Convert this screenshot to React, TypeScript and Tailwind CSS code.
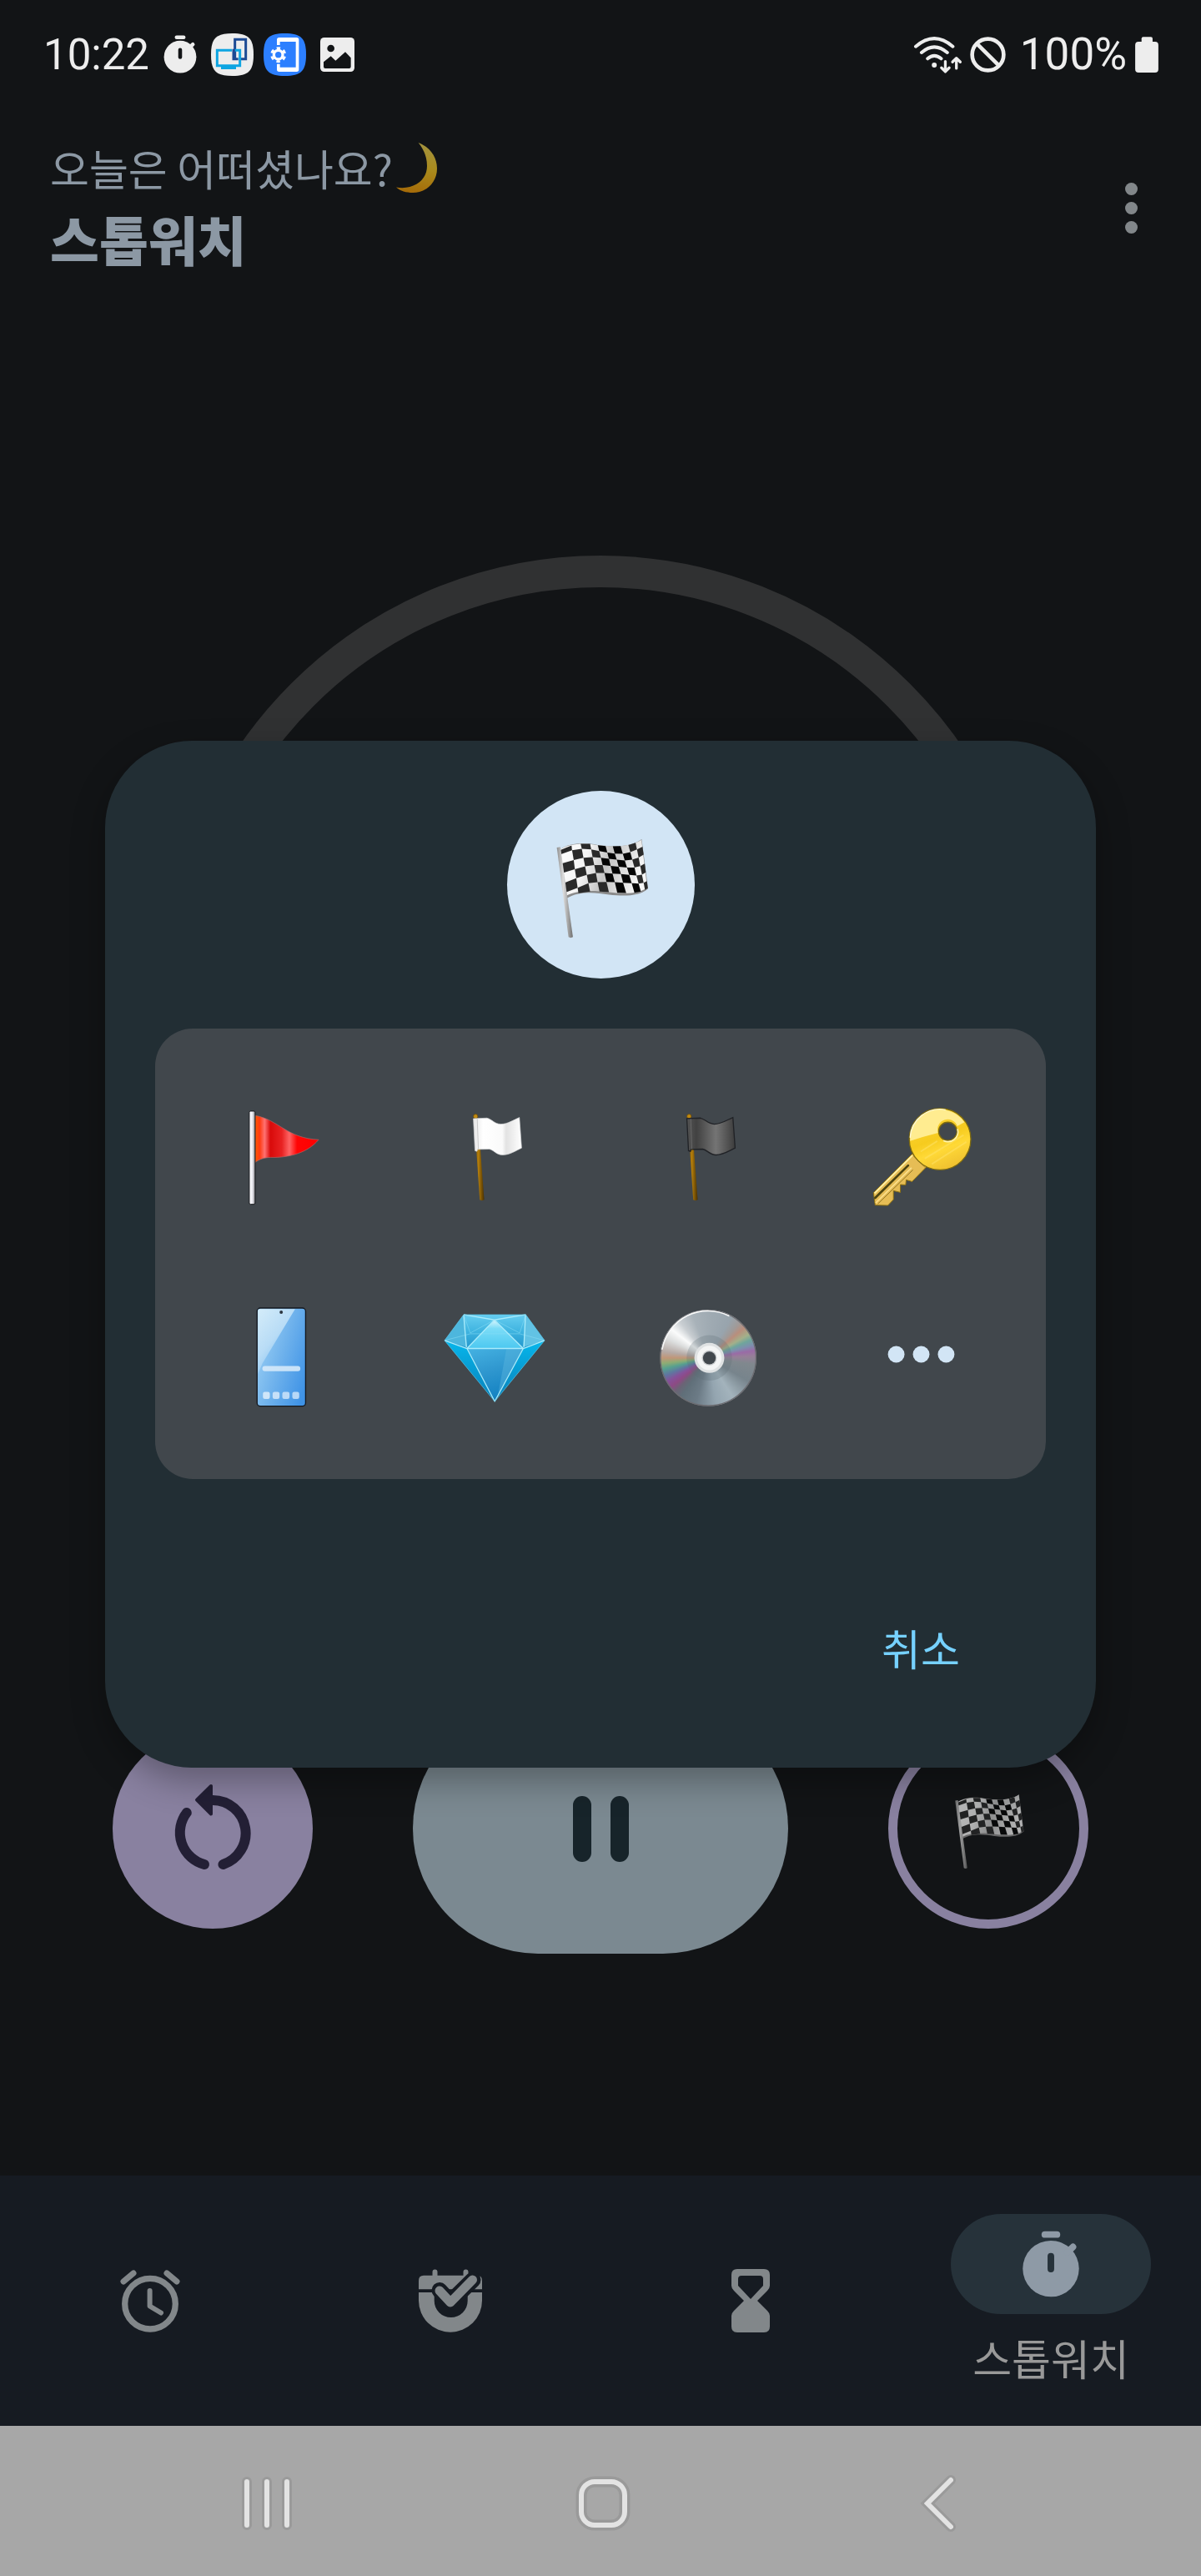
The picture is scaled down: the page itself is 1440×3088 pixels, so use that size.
import { useState } from 'react';

const sans = 'font-["Roboto","Noto_Sans_CJK_KR",sans-serif]';
const korean = 'font-["Noto_Sans_CJK_KR",sans-serif]';

// Column edges of the checkered cloth: x at the top, x at the bottom, then the y of every row line
const clothEdges = [
  { top: 245, bottom: 266, rows: [266, 281, 314, 348, 384, 419, 434] },
  { top: 285, bottom: 310, rows: [250, 267, 302, 335, 368, 402, 422] },
  { top: 318, bottom: 352, rows: [244, 262, 294, 325, 356, 386, 416] },
  { top: 352, bottom: 386, rows: [244, 264, 292, 320, 349, 382, 416] },
  { top: 380, bottom: 420, rows: [249, 270, 294, 320, 349, 381, 418] },
  { top: 408, bottom: 450, rows: [252, 275, 298, 323, 351, 382, 420] },
  { top: 434, bottom: 482, rows: [253, 279, 301, 326, 353, 384, 421] },
  { top: 462, bottom: 512, rows: [252, 280, 304, 329, 356, 386, 420] },
  { top: 490, bottom: 535, rows: [248, 274, 301, 329, 358, 387, 416] },
  { top: 516, bottom: 550, rows: [240, 264, 293, 324, 355, 384, 410] },
  { top: 538, bottom: 560, rows: [228, 254, 283, 315, 347, 378, 404] },
];

const clothPoint = (column: number, row: number) => {
  const { top, bottom, rows } = clothEdges[column];
  const ratio = (rows[row] - rows[0]) / (rows[6] - rows[0]);
  return `${Math.round(top + (bottom - top) * ratio)},${rows[row]}`;
};

const clothCells = clothEdges.slice(1).flatMap((_, column) =>
  [0, 1, 2, 3, 4, 5]
    .filter((row) => (row + column) % 2 === 0)
    .map((row) => ({
      key: `${column}-${row}`,
      fill: column > 3 && column < 8 ? '#050505' : '#2a2a2a',
      points: [
        clothPoint(column, row),
        clothPoint(column + 1, row),
        clothPoint(column + 1, row + 1),
        clothPoint(column, row + 1),
      ].join(' '),
    }))
);

const CheckeredFlag = ({ className, id }: { className: string; id: string }) => (
  <svg viewBox="191 191 400 400" className={className} aria-hidden="true">
    <defs>
      <linearGradient id={`${id}-cloth`} x1="0" y1="0" x2="1" y2="0.2">
        <stop offset="0" stopColor="#ffffff" />
        <stop offset="0.35" stopColor="#f4f4f4" />
        <stop offset="0.6" stopColor="#c4c4c4" />
        <stop offset="1" stopColor="#f6f6f6" />
      </linearGradient>
      <linearGradient id={`${id}-pole`}>
        <stop offset="0" stopColor="#8d8d8d" />
        <stop offset="0.4" stopColor="#dcdcdc" />
        <stop offset="1" stopColor="#6f6f6f" />
      </linearGradient>
    </defs>
    <path
      d="M245 264C275 240 330 238 380 248C440 256 500 256 538 227L561 405C530 432 480 434 420 427C370 418 310 414 268 440Z"
      fill="#8b8b8b"
    />
    <path
      d="M245 264C275 243 330 239 380 249C440 256 500 254 537 229L558 402C530 422 480 426 420 418C370 412 310 408 266 431Z"
      fill={`url(#${id}-cloth)`}
    />
    {clothCells.map((cell) => (
      <polygon key={cell.key} points={cell.points} fill={cell.fill} />
    ))}
    <path d="M232 257L245 255L290 580Q282 585 274 580Z" fill={`url(#${id}-pole)`} />
  </svg>
);

const RedFlag = () => (
  <svg viewBox="88 109 400 400" className="size-[133px]" aria-hidden="true">
    <defs>
      <linearGradient id="red-cloth">
        <stop offset="0" stopColor="#ff5a00" />
        <stop offset="0.07" stopColor="#ff3a10" />
        <stop offset="0.15" stopColor="#ff7272" />
        <stop offset="0.24" stopColor="#d90a0a" />
        <stop offset="0.42" stopColor="#e82222" />
        <stop offset="0.54" stopColor="#ff6464" />
        <stop offset="0.66" stopColor="#ff0505" />
        <stop offset="1" stopColor="#ff0000" />
      </linearGradient>
      <linearGradient id="red-pole">
        <stop offset="0" stopColor="#ffffff" />
        <stop offset="0.5" stopColor="#ececf2" />
        <stop offset="1" stopColor="#8c8c90" />
      </linearGradient>
    </defs>
    <path
      d="M196 170C280 184 310 252 425 257C385 305 320 320 265 321C230 319 210 328 196 339Z"
      fill="url(#red-cloth)"
      stroke="#a86a6a"
      strokeWidth="2"
    />
    <rect x="175" y="154" width="21" height="336" rx="5" fill="url(#red-pole)" stroke="#14161a" strokeWidth="3" />
  </svg>
);

const PlainFlag = ({ dark = false }: { dark?: boolean }) => {
  const id = dark ? 'dark-cloth' : 'light-cloth';
  return (
    <svg viewBox="856 109 400 400" className="size-[133px]" aria-hidden="true">
      <defs>
        <linearGradient id={id}>
          <stop offset="0" stopColor={dark ? '#555555' : '#e6e6e6'} />
          <stop offset="0.2" stopColor={dark ? '#414141' : '#ffffff'} />
          <stop offset="0.6" stopColor={dark ? '#747474' : '#fafafa'} />
          <stop offset="0.68" stopColor={dark ? '#6a6a6a' : '#e2e2e2'} />
          <stop offset="1" stopColor={dark ? '#3c3c3c' : '#ffffff'} />
        </linearGradient>
        <linearGradient id={`${id}-pole`}>
          <stop offset="0" stopColor="#6b4600" />
          <stop offset="0.4" stopColor="#b57f0c" />
          <stop offset="1" stopColor="#4a3000" />
        </linearGradient>
      </defs>
      <path d="M984 180L998 180L1020 474Q1012 479 1004 474Z" fill={`url(#${id}-pole)`} />
      <circle cx="989" cy="173" r="8" fill="#c08a12" stroke="#5f3f04" strokeWidth="2" />
      <path
        d="M981 181L1030 179C1048 183 1056 200 1080 201C1105 201 1125 186 1147 177L1155 287C1135 296 1112 312 1086 312C1062 311 1055 294 1038 291L996 292L994 299L987 297Z"
        fill={`url(#${id})`}
        stroke={dark ? '#202226' : '#d5d7d8'}
        strokeWidth={dark ? 4 : 2}
      />
      <path d="M995 182L999 291" stroke={dark ? '#666666' : '#c9c9c9'} strokeWidth="3" />
    </svg>
  );
};

const KeyIcon = () => (
  <svg viewBox="832 109 400 400" className="size-[133px]" aria-hidden="true">
    <defs>
      <linearGradient id="key-head" x1="0.2" y1="0" x2="0.6" y2="1">
        <stop offset="0" stopColor="#ffd940" />
        <stop offset="0.5" stopColor="#f6cb1e" />
        <stop offset="0.7" stopColor="#ffd936" />
        <stop offset="1" stopColor="#efc030" />
      </linearGradient>
    </defs>
    <path
      d="M1003 305L860 448L866 493L912 494L932 473L932 441L957 447L957 419L976 420L978 402L999 408L1052 354Z"
      fill="#e6bd55"
      stroke="#8c6f10"
      strokeWidth="3"
      strokeLinejoin="round"
    />
    <path d="M1000 314L864 450" stroke="#fff0a8" strokeWidth="6" />
    <path d="M985 350L866 467" stroke="#4c4410" strokeWidth="8" strokeLinecap="round" />
    <path d="M997 358L868 485" stroke="#fbe08c" strokeWidth="5" />
    <path d="M1002 366L876 488" stroke="#8f7222" strokeWidth="3" />
    <path d="M1004 316L1046 357" stroke="#b58c20" strokeWidth="3" />
    <circle cx="1100" cy="255" r="111" fill="url(#key-head)" stroke="#7d6a10" strokeWidth="4" />
    <path d="M992 262A108 108 0 0 1 1188 194L1162 208A36 36 0 0 0 1093 232Q1040 245 992 262Z" fill="#ffec90" />
    <path d="M1030 300L1090 262M1045 325L1185 240M1070 345L1195 265" stroke="#ffe46a" strokeOpacity="0.5" strokeWidth="6" />
    <circle cx="1128" cy="227" r="33" fill="#41474c" stroke="#7d6a10" strokeWidth="4" />
    <path d="M992 250A108 108 0 0 1 1120 149" fill="none" stroke="#fff9d8" strokeWidth="4" />
    <path d="M1163 218A36 36 0 0 1 1112 260" fill="none" stroke="#fff4b0" strokeWidth="5" />
  </svg>
);

const PhoneIcon = () => (
  <svg viewBox="88 829 400 400" className="size-[133px]" aria-hidden="true">
    <defs>
      <linearGradient id="phone-screen" x1="0" y1="0.2" x2="1" y2="0.8">
        <stop offset="0" stopColor="#9fd2f5" />
        <stop offset="0.5" stopColor="#6fb2ec" />
        <stop offset="1" stopColor="#3f93e6" />
      </linearGradient>
      <linearGradient id="phone-glare" x1="0" y1="0" x2="0.7" y2="1">
        <stop offset="0" stopColor="#d4ecf9" />
        <stop offset="0.5" stopColor="#b8dcf6" />
        <stop offset="1" stopColor="#9fd0f4" stopOpacity="0" />
      </linearGradient>
    </defs>
    <rect x="203" y="862" width="175" height="354" rx="12" fill="url(#phone-screen)" stroke="#14181e" strokeWidth="4" />
    <path d="M206 874Q206 866 215 866L340 866L222 1062L206 1100Z" fill="url(#phone-glare)" />
    <circle cx="290" cy="877" r="6" fill="#2c3640" />
    <rect x="222" y="1071" width="137" height="19" rx="9" fill="#d5e9f9" fillOpacity="0.9" />
    <rect x="224" y="1164" width="25" height="26" rx="7" fill="#cfe6f9" />
    <rect x="259" y="1164" width="25" height="26" rx="7" fill="#c6e0f8" />
    <rect x="294" y="1164" width="26" height="26" rx="7" fill="#bcdaf7" />
    <rect x="330" y="1164" width="25" height="26" rx="7" fill="#b7d8f7" />
  </svg>
);

const GemIcon = () => (
  <svg viewBox="856 829 400 400" className="size-[133px]" aria-hidden="true">
    <defs>
      <linearGradient id="gem-top" x1="0" y1="0" x2="0" y2="1">
        <stop offset="0" stopColor="#66cdf0" />
        <stop offset="0.5" stopColor="#3fb4e0" />
        <stop offset="1" stopColor="#2196cc" />
      </linearGradient>
      <linearGradient id="gem-side" x1="0" y1="0" x2="0" y2="1">
        <stop offset="0" stopColor="#06b7ec" />
        <stop offset="1" stopColor="#0a7fb8" />
      </linearGradient>
      <linearGradient id="gem-front" x1="0" y1="0" x2="0.3" y2="1">
        <stop offset="0" stopColor="#45b2e2" />
        <stop offset="0.5" stopColor="#2f97cf" />
        <stop offset="1" stopColor="#1482c2" />
      </linearGradient>
      <linearGradient id="gem-crown" x1="0" y1="0" x2="0" y2="1">
        <stop offset="0" stopColor="#d8f5fd" />
        <stop offset="0.3" stopColor="#7bdcf7" />
        <stop offset="1" stopColor="#4cc8f0" />
      </linearGradient>
    </defs>
    <path d="M946 886H1170L1238 979L1161 1008H958L877 979Z" fill="url(#gem-top)" />
    <path d="M946 886L877 979L958 1003Z" fill="#4db6dd" />
    <path d="M1170 886L1238 979L1161 1003Z" fill="#62c2e4" />
    <path d="M877 979L958 1008L1058 1199Z" fill="url(#gem-side)" />
    <path d="M1238 979L1161 1008L1058 1199Z" fill="url(#gem-side)" />
    <path d="M958 1008H1161L1058 1199Z" fill="url(#gem-front)" />
    <path d="M1057 905L1161 1008H958Z" fill="url(#gem-crown)" />
    <path d="M1100 1010L1158 1010L1070 1175Z" fill="#5cb6de" fillOpacity="0.45" />
    <path
      d="M946 886L970 952L1057 905L1148 952L1170 886M877 979L970 955H1148L1238 979"
      fill="none"
      stroke="#8ddff5"
      strokeOpacity="0.5"
      strokeWidth="3"
    />
    <path
      d="M946 886L1057 905L1170 886M946 888L956 1003M1169 888L1163 1003M877 979L958 1008L1057 905L1161 1008L1238 979M958 1008H1161L1058 1199Z"
      fill="none"
      stroke="#a9ebfb"
      strokeWidth="4"
      strokeLinejoin="round"
    />
    <path d="M877 979L946 886H1170L1238 979L1058 1199Z" fill="none" stroke="#5cc4e6" strokeWidth="2" />
  </svg>
);

const DiscIcon = () => (
  <svg viewBox="64 829 400 400" className="size-[133px]" aria-hidden="true">
    <foreignObject x="92" y="868" width="348" height="348">
      <div className="h-full w-full rounded-full bg-[conic-gradient(#a0abb3_0deg,#98a4ad_30deg,#a09a98_42deg,#b98e7c_50deg,#a3b08a_60deg,#6fa59c_67deg,#7d8fae_74deg,#9a6ba6_81deg,#967f98_88deg,#80888e_98deg,#77848c_120deg,#a3b3bc_148deg,#94a5b0_170deg,#6c7b86_195deg,#606f79_215deg,#6a6475_224deg,#8d4a84_232deg,#85519a_240deg,#5f76a0_248deg,#56a08f_256deg,#8dac74_263deg,#c09678_270deg,#b5a9a4_278deg,#dcdede_295deg,#fafbfb_308deg,#c9ced2_322deg,#a8b2b9_340deg,#a0abb3_360deg)]" />
    </foreignObject>
    <circle cx="266" cy="1042" r="172" fill="none" stroke="#6d6d72" strokeWidth="4" />
    <path d="M100 1010A168 168 0 0 1 340 890" fill="none" stroke="#f7f8f8" strokeWidth="5" strokeLinecap="round" />
    <circle cx="270" cy="1042" r="82" fill="#5c6a74" fillOpacity="0.25" />
    <circle cx="270" cy="1042" r="54" fill="#dfe2e3" />
    <circle cx="270" cy="1042" r="44" fill="#f4f5f5" />
    <circle cx="270" cy="1042" r="27" fill="#c4c7c9" />
    <circle cx="270" cy="1042" r="23" fill="#41474c" />
  </svg>
);

const MoreIcon = () => (
  <svg viewBox="832 829 400 400" className="size-[133px]" fill="#d2e5f5" aria-hidden="true">
    <circle cx="942" cy="1029" r="30" />
    <circle cx="1032" cy="1029" r="30" />
    <circle cx="1122" cy="1029" r="30" />
  </svg>
);

const MoonIcon = () => (
  <svg viewBox="0 0 50 60" className="h-[60px] w-[50px]" aria-hidden="true">
    <defs>
      <linearGradient id="moon" x1="0.3" y1="0" x2="0.2" y2="1">
        <stop offset="0" stopColor="#a3923c" />
        <stop offset="0.5" stopColor="#a98a1c" />
        <stop offset="1" stopColor="#a56a08" />
      </linearGradient>
    </defs>
    <path d="M26.600 0C40 5 49 17 49 31C49 48 36 60 20 60C12 60 5 58 0 53.500C20 57 37 46 37 28C37 17 33 8 26.600 0Z" fill="url(#moon)" />
  </svg>
);

const StopwatchIcon = ({ className, slot }: { className: string; slot: string }) => (
  <svg viewBox="438 212 204 242" className={className} fill="currentColor" aria-hidden="true">
    <rect x="506" y="214" width="68" height="24" rx="12" />
    <circle cx="540" cy="350" r="102" />
    <path d="M600 290L620 271" stroke="currentColor" strokeWidth="24" strokeLinecap="round" />
    <rect x="528" y="293" width="24" height="70" rx="12" fill={slot} />
  </svg>
);

const ScreenShareIcon = () => (
  <svg viewBox="198 30 153 153" className="size-[51px]" fill="none" aria-hidden="true">
    <path d="M274.500 30C333 30 351 48 351 106.500C351 165 333 183 274.500 183C216 183 198 165 198 106.500C198 48 216 30 274.500 30Z" fill="#ededed" />
    <path d="M284 122V52H323V122H301" stroke="#1c4a94" strokeWidth="9" />
    <path d="M284 91H302V146H220V91H273" stroke="#0ea5e2" strokeWidth="9" />
    <path d="M279 86V122H296" stroke="#1c4a94" strokeWidth="9" />
    <path d="M234 154H288" stroke="#0ea5e2" strokeWidth="10" />
  </svg>
);

const DeviceCareIcon = () => (
  <svg viewBox="387 30 153 153" className="size-[51px]" fill="none" aria-hidden="true">
    <path d="M463.500 30C522 30 540 48 540 106.500C540 165 522 183 463.500 183C405 183 387 165 387 106.500C387 48 405 30 463.500 30Z" fill="#2c7fff" />
    <path
      d="M435 72V53Q435 45 443 45H506Q514 45 514 53V160Q514 168 506 168H443Q435 168 435 160V140H446V152H503V60H446V72Z"
      fill="#ffffff"
    />
    <circle cx="440" cy="107" r="16" stroke="#ffffff" strokeWidth="10" />
    <circle cx="440" cy="107" r="24" stroke="#ffffff" strokeWidth="9" strokeDasharray="13 12.130" strokeDashoffset="-6" />
  </svg>
);

const PictureIcon = () => (
  <svg viewBox="591 45 123 123" className="size-[41px]" aria-hidden="true">
    <rect x="591" y="45" width="123" height="123" rx="14" fill="#ededed" />
    <circle cx="629" cy="84" r="13" fill="#121416" />
    <path d="M603 150V133L629 112L646 128L681 97L701 118V150Q701 156 695 156H609Q603 156 603 150Z" fill="#121416" />
  </svg>
);

const WifiIcon = () => (
  <svg
    viewBox="105 120 178 141"
    className="h-[47px] w-[59px]"
    fill="none"
    stroke="currentColor"
    strokeWidth="12"
    strokeLinecap="round"
    strokeLinejoin="round"
    aria-hidden="true"
  >
    <path d="M114 161Q181 103 248 161M135 183Q181 143 228 183M157 205Q181 184 206 205" />
    <circle cx="181" cy="228" r="9" fill="currentColor" stroke="none" />
    <path d="M221 215V252M207 238L221 252L235 238M261 240V204M247 217L261 203L275 217" strokeWidth="10" />
  </svg>
);

const BlockedIcon = () => (
  <svg viewBox="305 120 136 136" className="size-[45px]" fill="none" stroke="currentColor" strokeWidth="14" aria-hidden="true">
    <circle cx="373" cy="188" r="57" />
    <path d="M333 148L413 228" />
  </svg>
);

const BatteryIcon = () => (
  <svg viewBox="903 128 84 130" className="h-[43px] w-[28px]" fill="currentColor" aria-hidden="true">
    <rect x="926" y="129" width="40" height="30" rx="6" />
    <rect x="903" y="146" width="84" height="112" rx="12" />
  </svg>
);

const ResetIcon = () => (
  <svg viewBox="-5 -5 110 110" className="size-[110px]" fill="none" aria-hidden="true">
    <g stroke="#231f35" strokeWidth="12" strokeLinecap="round">
      <path d="M50 16A39.500 39.500 0 0 1 62.500 93" />
      <path d="M18.800 31A39.500 39.500 0 0 0 40 93" />
    </g>
    <path d="M31 15.700L48 -1V32.500Z" fill="#231f35" stroke="#231f35" strokeWidth="4" strokeLinejoin="round" />
  </svg>
);

const AlarmIcon = () => (
  <svg viewBox="0 0 80 80" className="size-20" fill="none" stroke="currentColor" strokeLinecap="round" strokeLinejoin="round" aria-hidden="true">
    <circle cx="40" cy="43.700" r="30.300" strokeWidth="7.300" />
    <path d="M20 7L8 17M60 7L72 17" strokeWidth="7" />
    <path d="M39.600 28V46.500L53 54.500" strokeWidth="6" />
  </svg>
);

const CalendarIcon = () => (
  <svg viewBox="0 0 80 80" className="size-20" fill="none" strokeLinecap="round" strokeLinejoin="round" aria-hidden="true">
    <path d="M21.500 5.500V14M58.500 5.500V14" stroke="currentColor" strokeWidth="6" />
    <path d="M2 26.300V16Q2 9.700 8 9.700H72Q78 9.700 78 16V26.300Z" fill="currentColor" />
    <path d="M2 30H78V39.700A38 38 0 0 1 2 39.700Z" fill="currentColor" />
    <path d="M20.700 28V40A20 20 0 0 0 60.700 40V34L64.600 28Z" fill="#161b22" />
    <path d="M27 27.500L40 41.500L67 15" stroke="#161b22" strokeWidth="19" />
    <path d="M27 28L40 42L66.500 15" stroke="currentColor" strokeWidth="11" />
  </svg>
);

const HourglassIcon = () => (
  <svg viewBox="0 0 48 76" className="h-[76px] w-[48px]" fill="currentColor" fillRule="evenodd" aria-hidden="true">
    <path d="M8 0H40Q47 0 47 7V20Q47 23 44 26L32 38L44 50Q47 53 47 56V69Q47 76 40 76H8Q1 76 1 69V56Q1 53 4 50L16 38L4 26Q1 23 1 20V7Q1 0 8 0ZM13 8Q9 8 9 12V20L24 36L39 20V12Q39 8 35 8Z" />
  </svg>
);

const markers = [
  { name: '빨간 깃발', icon: <RedFlag /> },
  { name: '흰 깃발', icon: <PlainFlag /> },
  { name: '검은 깃발', icon: <PlainFlag dark /> },
  { name: '열쇠', icon: <KeyIcon /> },
  { name: '휴대전화', icon: <PhoneIcon /> },
  { name: '보석', icon: <GemIcon /> },
  { name: '디스크', icon: <DiscIcon /> },
  { name: '더 보기', icon: <MoreIcon /> },
];

const tabs = [
  { name: '알람', icon: <AlarmIcon /> },
  { name: '일정', icon: <CalendarIcon /> },
  { name: '타이머', icon: <HourglassIcon /> },
];

const StatusBar = () => (
  <div className={`flex h-[130px] items-center justify-between pr-[51px] pl-[52px] leading-none text-[#ededed] ${sans}`}>
    <div className="flex items-center gap-[17px]">
      <span className="text-[51px]">10:22</span>
      <StopwatchIcon className="h-[46px] w-[40px]" slot="#121416" />
      <div className="flex items-center gap-3">
        <ScreenShareIcon />
        <DeviceCareIcon />
      </div>
      <PictureIcon />
    </div>
    <div className="flex items-center gap-2">
      <WifiIcon />
      <BlockedIcon />
      <span className="pr-0.5 pl-2 text-[53px]">100%</span>
      <BatteryIcon />
    </div>
  </div>
);

const MarkerDialog = ({ onClose }: { onClose: () => void }) => (
  <div className="absolute inset-0 flex items-center justify-center px-[126px] pt-[99px] pb-[180px]">
    <div
      role="dialog"
      aria-modal="true"
      aria-label="깃발 선택"
      className="w-full max-w-[1188px] rounded-[104px] bg-[#222e34] p-[60px] pb-[84px] shadow-[0_16px_40px_rgba(0,0,0,0.3)]"
    >
      <div className="mx-auto flex size-[225px] items-center justify-center rounded-full bg-[#d2e5f5]">
        <CheckeredFlag className="size-[133px]" id="selected" />
      </div>
      <div className="mt-[60px] grid grid-cols-4 rounded-[45px] bg-[#41474c] px-[22px] py-[30px]">
        {markers.map((marker) => (
          <button key={marker.name} type="button" aria-label={marker.name} className="flex h-60 items-center justify-center">
            {marker.icon}
          </button>
        ))}
      </div>
      <div className="flex justify-end pt-[142px] pr-[30px]">
        <button type="button" onClick={onClose} className={`h-[120px] w-60 text-[51px] text-[#76d1ff] ${korean}`}>
          취소
        </button>
      </div>
    </div>
  </div>
);

const App = () => {
  const [dialogOpen, setDialogOpen] = useState(true);

  return (
    <div className={`relative flex min-h-screen flex-col bg-[#121416] ${korean}`}>
      <StatusBar />

      {/* Header */}
      <header className="flex items-center justify-between px-[60px] pt-[35px] text-[#8c98a4]">
        <div>
          <p className="flex items-center gap-1 text-[51px] leading-[72px]">
            오늘은 어떠셨나요?
            <MoonIcon />
          </p>
          <h1 className="text-[64px] leading-[96px] font-black">스톱워치</h1>
        </div>
        <button type="button" aria-label="메뉴" className="flex w-12 flex-col items-center gap-2">
          <span className="size-[15px] rounded-full bg-[#82878a]" />
          <span className="size-[15px] rounded-full bg-[#82878a]" />
          <span className="size-[15px] rounded-full bg-[#82878a]" />
        </button>
      </header>

      {/* Dial and controls */}
      <main className="flex flex-1 flex-col items-center pt-[333px]">
        <div className="aspect-square w-full max-w-[1050px] rounded-full border-[38px] border-[#303132]" />
        <div className="flex items-center gap-[120px] pt-[326px]">
          <button type="button" aria-label="초기화" className="flex size-60 items-center justify-center rounded-full bg-[#8981a0]">
            <ResetIcon />
          </button>
          <button
            type="button"
            aria-label="일시정지"
            className="flex h-[300px] w-[450px] items-center justify-center gap-[23px] rounded-full bg-[#7b8991]"
          >
            <span className="h-[79px] w-[22px] rounded-full bg-[#17242a]" />
            <span className="h-[79px] w-[22px] rounded-full bg-[#17242a]" />
          </button>
          <button
            type="button"
            aria-label="구간 기록"
            onClick={() => setDialogOpen(true)}
            className="flex size-60 items-center justify-center rounded-full border-[11px] border-[#8981a0]"
          >
            <CheckeredFlag className="size-[100px] opacity-70" id="lap" />
          </button>
        </div>
      </main>

      {/* Tabs */}
      <nav className="grid h-[300px] grid-cols-4 bg-[#161b22] text-[#82878a]">
        {tabs.map((tab) => (
          <button key={tab.name} type="button" aria-label={tab.name} className="flex items-center justify-center">
            {tab.icon}
          </button>
        ))}
        <button type="button" className="flex flex-col items-center justify-center gap-4">
          <span className="flex h-[120px] w-60 items-center justify-center rounded-full bg-[#26323a] text-[#8e9aa6]">
            <StopwatchIcon className="h-[80px] w-[68px]" slot="#26323a" />
          </span>
          <span className="text-[51px] leading-[72px] text-[#999999]">스톱워치</span>
        </button>
      </nav>

      {/* System navigation */}
      <div className="flex h-[180px] items-center justify-center gap-[323px] bg-[#a7a7a7] pt-[5px] pl-[6px]">
        <button type="button" aria-label="최근 앱" className="flex w-20 justify-center">
          <svg viewBox="0 0 80 80" className="size-20" fill="none" strokeLinecap="round" aria-hidden="true">
            <path d="M16 14V66M40 14V66M64 14V66" stroke="#9a9a9a" strokeWidth="12" />
            <path d="M16 14V66M40 14V66M64 14V66" stroke="#e3e3e3" strokeWidth="6" />
          </svg>
        </button>
        <button type="button" aria-label="홈" className="flex w-20 justify-center">
          <svg viewBox="0 0 80 80" className="size-20" fill="none" aria-hidden="true">
            <rect x="14" y="14" width="52" height="52" rx="16" stroke="#9a9a9a" strokeWidth="13" />
            <rect x="14" y="14" width="52" height="52" rx="16" stroke="#e3e3e3" strokeWidth="6" />
          </svg>
        </button>
        <button type="button" aria-label="뒤로" className="flex w-20 justify-center">
          <svg viewBox="0 0 80 80" className="size-20" fill="none" strokeLinecap="round" strokeLinejoin="miter" aria-hidden="true">
            <path d="M54 12L26 40L54 68" stroke="#9a9a9a" strokeWidth="12" />
            <path d="M54 12L26 40L54 68" stroke="#e3e3e3" strokeWidth="6" />
          </svg>
        </button>
      </div>

      {dialogOpen && <MarkerDialog onClose={() => setDialogOpen(false)} />}
    </div>
  );
};

export default App;
